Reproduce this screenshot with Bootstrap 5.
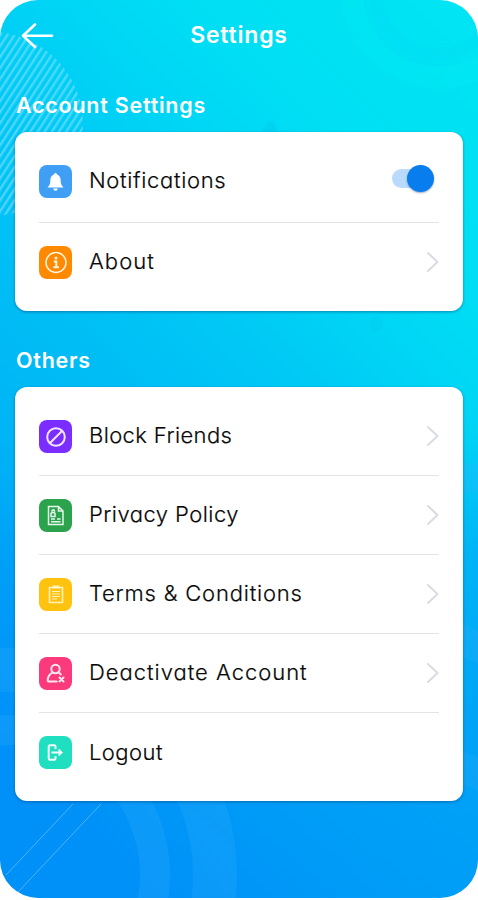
<!DOCTYPE html>
<html lang="en">
<head>
<meta charset="utf-8">
<meta name="viewport" content="width=device-width, initial-scale=1">
<title>Settings</title>
<link href="https://cdn.jsdelivr.net/npm/bootstrap@5.3.0/dist/css/bootstrap.min.css" rel="stylesheet">
<style>
body{font-family:Inter,"Open Sans",sans-serif;font-feature-settings:"cv11";background:#fff;overflow:hidden}
.screen{width:478px;height:898px;border-radius:38px;isolation:isolate;background:linear-gradient(180deg,rgba(0,146,248,0) 48%,rgba(0,148,248,.4) 62%,rgba(0,146,248,.6) 80%,rgba(0,146,248,.66) 100%),linear-gradient(225deg,#00e5f3 0%,#00dff4 20%,#00d6f5 30%,#00c9f5 41%,#00bcf5 56%,#00b2f5 70%,#0090f8 88%,#008ff8 100%)}
.backdrop{z-index:-1}
.topbar{height:70px}
.back-link{left:20px;top:22px}
.page-title{font-size:23px;font-weight:600;letter-spacing:.8px;line-height:30px}
.section-title{font-size:21.5px;font-weight:600;letter-spacing:.75px;line-height:30px;padding:20px 16px 12.4px}
.section-title-others{padding-top:33.6px}
.panel{border:0;border-radius:12px;margin:0 15.4px;padding:0 23.6px;box-shadow:0 1px 3px rgba(0,60,110,.5)}
.panel-account{height:179px;padding-top:8px}
.panel-others{height:413.500px;padding-top:10px}
.setting{height:79px;border-bottom:1.500px solid #e3e4e7}
.panel-account .setting{height:83px}
.panel-account .setting:last-child{height:78px}
.setting:last-child{border-bottom:0}
.tile{width:33px;height:33px;border-radius:8px;margin-right:17px}
.tile svg{display:block;width:33px;height:33px}
.setting-name{font-size:22px;font-weight:300;letter-spacing:.66px;color:#080808;line-height:28px;padding-bottom:2px;white-space:nowrap;-webkit-text-stroke:.2px #080808}
.name-about{letter-spacing:1.05px}
.name-block{letter-spacing:.38px}
.name-privacy{letter-spacing:.46px}
.name-terms{letter-spacing:.81px}
.name-deactivate{letter-spacing:.98px}
.name-logout{letter-spacing:.45px}
.t-blue{background:#409ff5}.t-orange{background:#ff8a00}.t-violet{background:#7b2cff}.t-green{background:#2ba24c}.t-yellow{background:#ffc20e}.t-pink{background:#fa3a7b}.t-teal{background:#20dfc0}
.toggle{width:43px;height:26px;margin-right:4px;margin-top:-6px}
.toggle-track{width:34px;height:19px;border-radius:10px;background:#b9dafb}
.toggle-knob{width:27px;height:27px;border-radius:50%;background:#087eee;margin-left:-19px;box-shadow:0 1px 2px rgba(0,40,100,.4)}
.chevron{width:13px;height:22px;fill:none;stroke:#d9dce3;stroke-width:2;stroke-linecap:round;stroke-linejoin:round}
</style>
</head>
<body>
<main class="screen position-relative overflow-hidden">
<svg class="backdrop position-absolute top-0 start-0" width="478" height="898" aria-hidden="true">
<defs>
<pattern id="stripes" width="6" height="6" patternUnits="userSpaceOnUse" patternTransform="rotate(33)"><rect width="2.4" height="6" fill="#7ee0ff" fill-opacity=".6"/></pattern>
</defs>
<circle cx="-9" cy="124" r="92" fill="url(#stripes)"/>
<circle cx="438" cy="-8" r="86" fill="none" stroke="#00eef0" stroke-opacity=".25" stroke-width="22"/>
<circle cx="438" cy="-8" r="62" fill="none" stroke="#00d8f5" stroke-opacity=".2" stroke-width="12"/>
<path d="M262 132q8-22 16 0z" fill="#00b8e8" opacity=".25"/>
<circle cx="376" cy="324" r="7" fill="#00bfe8" opacity=".2"/>
<g fill="none" stroke="#38b0ff" stroke-opacity=".22">
<circle cx="10" cy="875" r="145" stroke-width="30"/>
<circle cx="10" cy="875" r="205" stroke-width="44"/>
<path d="M450 482q20-5 40-6" stroke-width="28"/>
<path d="M450 635q20 8 40 18M450 762q20 8 40 18" stroke-width="30" stroke-opacity=".2"/>
</g>
<path d="M73 804L6 875M101 804L18 892" stroke="#60bcff" stroke-opacity=".8" fill="none"/>
</svg>
<header class="topbar position-relative d-flex align-items-center justify-content-center text-white">
<svg class="back-link position-absolute" role="img" aria-label="Back" width="36" height="28" fill="none" stroke="#fff" stroke-width="2.6" stroke-linecap="round" stroke-linejoin="round"><path d="M32 13.700H3M15 2.500L3 13.700L15 25"/></svg>
<h1 class="page-title mb-0">Settings</h1>
</header>
<h2 class="section-title text-white mb-0">Account Settings</h2>
<section class="card panel panel-account">
<div class="setting d-flex align-items-center">
<span class="tile t-blue"><svg viewBox="0 0 33 33" fill="#fff"><path d="M16.500 8a1.500 1.500 0 0 1 1.500 1.500c3 1 3.700 3.300 3.700 6.500 0 3 .8 4.300 2.800 6.500H8.500c2-2.200 2.800-3.500 2.800-6.500 0-3.200.7-5.500 3.700-6.500A1.500 1.500 0 0 1 16.500 8zM14.300 23.500h4.400a2.200 2.200 0 0 1-4.400 0z"/></svg></span>
<span class="setting-name me-auto">Notifications</span>
<span class="toggle d-flex align-items-center"><span class="toggle-track flex-shrink-0"></span><span class="toggle-knob flex-shrink-0"></span></span>
</div>
<div class="setting d-flex align-items-center">
<span class="tile t-orange"><svg viewBox="0 0 33 33" fill="none" stroke="#fff3df" stroke-width="1.500"><circle cx="17" cy="16.500" r="10"/><circle cx="17" cy="12" r="1.500" fill="#fff3df" stroke="none"/><path d="M14.800 15.500h2.500v5.500M14.500 21.300h5.500" stroke-width="2"/></svg></span>
<span class="setting-name name-about me-auto">About</span>
<svg class="chevron" viewBox="0 0 13 22"><path d="M2 2l9.500 9L2 20"/></svg>
</div>
</section>
<h2 class="section-title section-title-others text-white mb-0">Others</h2>
<section class="card panel panel-others">
<div class="setting d-flex align-items-center">
<span class="tile t-violet"><svg viewBox="0 0 33 33" fill="none" stroke="#f1e6ff" stroke-width="2"><circle cx="17" cy="17" r="8.800"/><path d="M11 23L23 11"/></svg></span>
<span class="setting-name name-block me-auto">Block Friends</span>
<svg class="chevron" viewBox="0 0 13 22"><path d="M2 2l9.500 9L2 20"/></svg>
</div>
<div class="setting d-flex align-items-center">
<span class="tile t-green"><svg viewBox="0 0 33 33" fill="none" stroke="#e4f7e8" stroke-width="1.500"><path d="M9.500 7.500h10l4.500 4.500v13.500H9.500zM19.500 7.500V12H24"/><path d="M12 17.500v-2.500c0-1 .8-1.500 2-1.500s2 .5 2 1.500v2.500zM13 12.800v-1c0-1.300 2.500-1.300 2.500 0v1M12 20h4M18 20h3.500M12 22.700h9.500"/></svg></span>
<span class="setting-name name-privacy me-auto">Privacy Policy</span>
<svg class="chevron" viewBox="0 0 13 22"><path d="M2 2l9.500 9L2 20"/></svg>
</div>
<div class="setting d-flex align-items-center">
<span class="tile t-yellow"><svg viewBox="0 0 33 33" fill="none" stroke="#fff2bd" stroke-width="1.600"><path d="M10.500 9.500h13v15h-13z"/><path d="M13.500 9h7" stroke-width="3"/><path d="M13 13.500h8M13 16h8M13 18.500h8M13 21h5" stroke-width="1.200"/></svg></span>
<span class="setting-name name-terms me-auto">Terms &amp; Conditions</span>
<svg class="chevron" viewBox="0 0 13 22"><path d="M2 2l9.500 9L2 20"/></svg>
</div>
<div class="setting d-flex align-items-center">
<span class="tile t-pink"><svg viewBox="0 0 33 33" fill="none" stroke="#ffe6ef" stroke-width="2" stroke-linecap="round"><circle cx="16.500" cy="12" r="4.200"/><path d="M13.700 15.300c-3.300 1.700-5 4.500-5 8.200 0 .8.400 1 1 1h8M19.300 15.300c1 .5 1.800 1.200 2.500 2.200M20.500 20.500l4 4M24.500 20.500l-4 4"/></svg></span>
<span class="setting-name name-deactivate me-auto">Deactivate Account</span>
<svg class="chevron" viewBox="0 0 13 22"><path d="M2 2l9.500 9L2 20"/></svg>
</div>
<div class="setting d-flex align-items-center">
<span class="tile t-teal"><svg viewBox="0 0 33 33" fill="none" stroke="#f0fffb" stroke-width="2" stroke-linejoin="round"><path d="M16.500 13v-2.500c0-.8-.5-1.200-1.200-1.200H11c-.8 0-1.300.5-1.300 1.300v11.800c0 .8.500 1.300 1.300 1.300h4.300c.7 0 1.200-.4 1.200-1.200V20M12.500 16.500h8"/><path d="M20 13.300l3.500 3.200-3.500 3.200z" fill="#f0fffb" stroke-width="1"/></svg></span>
<span class="setting-name name-logout me-auto">Logout</span>
</div>
</section>
</main>
<script src="https://cdn.jsdelivr.net/npm/bootstrap@5.3.0/dist/js/bootstrap.bundle.min.js"></script>
</body>
</html>
